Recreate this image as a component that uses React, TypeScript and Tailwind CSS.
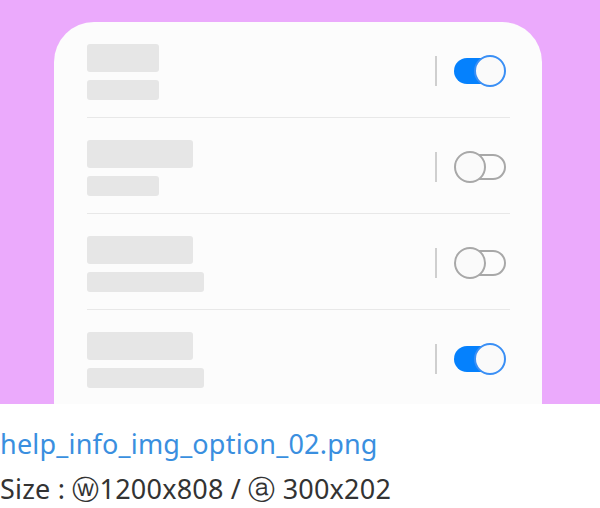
const rows = [
  { top: "w-[72px]", bottom: "w-[72px]", on: true },
  { top: "w-[106px]", bottom: "w-[72px]", on: false },
  { top: "w-[106px]", bottom: "w-[117px]", on: false },
  { top: "w-[106px]", bottom: "w-[117px]", on: true },
];

function Toggle({ on }: { on: boolean }) {
  if (on) {
    return (
      <div className="relative w-[52px] h-[33px]">
        <div className="absolute left-0 top-[3px] w-[40px] h-[26px] rounded-full bg-[#0581fd]" />
        <div className="absolute right-0 top-0 w-[32px] h-[32px] rounded-full bg-[#fafafa] border-2 border-[#3a8ff5]" />
      </div>
    );
  }
  return (
    <div className="relative w-[52px] h-[33px]">
      <div className="absolute right-0 top-[3px] w-[40px] h-[26px] rounded-full border-2 border-[#a8a8a8]" />
      <div className="absolute left-0 top-0 w-[32px] h-[32px] rounded-full bg-[#fafafa] border-2 border-[#a8a8a8]" />
    </div>
  );
}

export default function App() {
  return (
    <div className="w-[600px] h-[508px] bg-white font-['Noto_Sans',sans-serif]">
      <div className="h-[404px] bg-[#ebaafc] pt-[22px] overflow-hidden">
        <div className="ml-[54px] w-[488px] h-[420px] bg-[#fcfcfc] rounded-[40px] pl-[33px] pr-[32px]">
          {rows.map((r, i) => (
            <div
              key={i}
              className="flex items-center pt-[22px] pb-[17px] border-b border-[#e8e8e8]"
            >
              <div className="flex flex-col gap-[8px] flex-1">
                <div className={`${r.top} h-[28px] rounded-[3px] bg-[#e6e6e6]`} />
                <div className={`${r.bottom} h-[20px] rounded-[3px] bg-[#e6e6e6]`} />
              </div>
              <div className="w-[2px] h-[30px] bg-[#cfcfcf] mr-[17px] -mt-[2px]" />
              <div className="-mt-[2px] mr-[4px]">
                <Toggle on={r.on} />
              </div>
            </div>
          ))}
        </div>
      </div>
      <div className="pt-[17px] text-[27px] leading-[45px] tracking-[0.2px] whitespace-nowrap">
        <div className="text-[#3a8fdf]">help_info_img_option_02.png</div>
        <div className="text-[#333333]">Size : ⓦ1200x808 / ⓐ 300x202</div>
      </div>
    </div>
  );
}
